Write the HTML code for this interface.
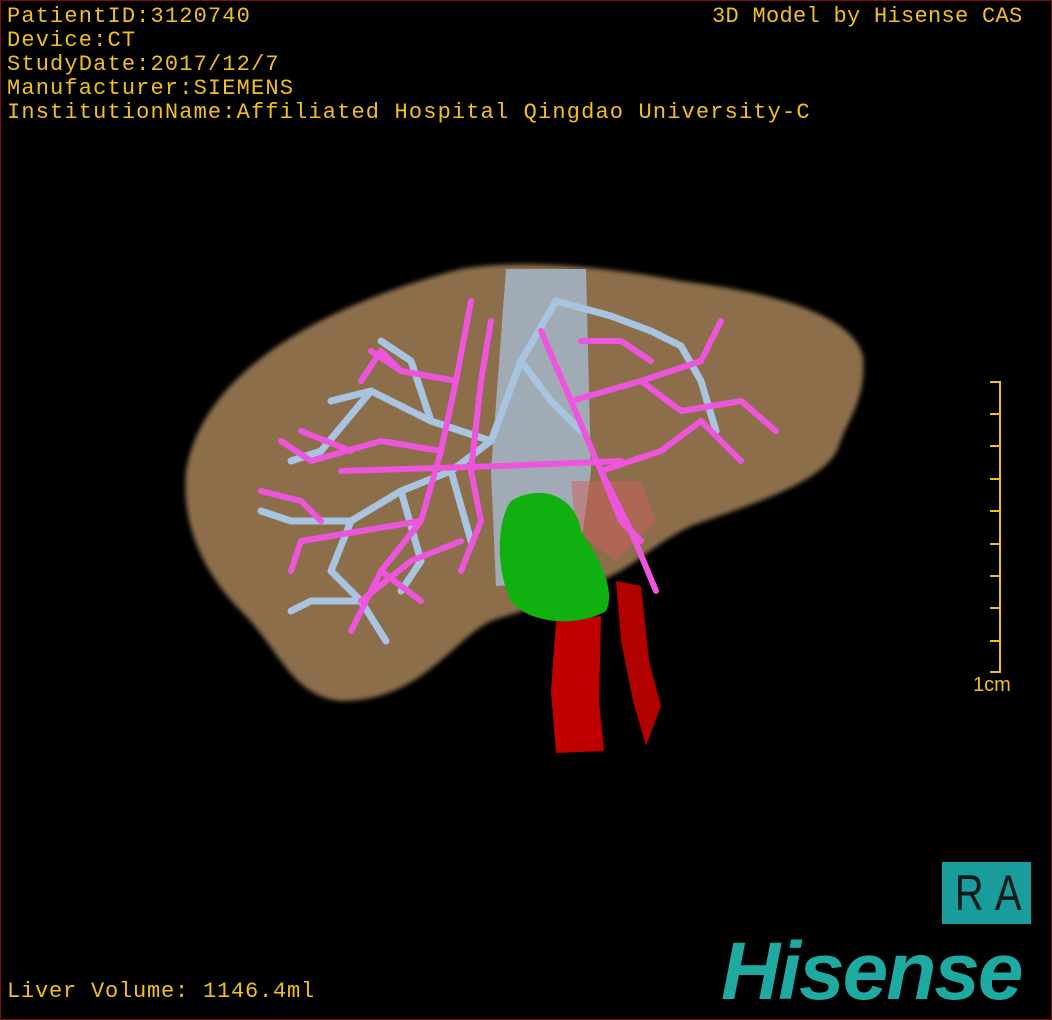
<!DOCTYPE html>
<html><head><meta charset="utf-8"><style>
html,body{margin:0;padding:0;background:#000}
#w{position:relative;width:1050px;height:1018px;border:1px solid #7a1010;overflow:hidden;background:#000}
.t{position:absolute;color:#f0c020;font-family:"Liberation Mono",monospace;font-size:22px;line-height:24px;white-space:pre;letter-spacing:1.15px}
</style></head><body><div id="w">
<svg width="1050" height="1018" style="position:absolute;left:0;top:0">
<defs><filter id="b"><feGaussianBlur stdDeviation="2.5"/></filter></defs>
<path d="M185,470 C200,380 300,310 460,268 C520,258 600,265 680,280 C760,290 850,310 862,355 C866,400 845,420 838,445 C825,480 760,500 690,525 C650,545 640,560 610,575 C560,600 520,610 490,620 C450,640 420,700 340,700 C290,695 280,650 240,610 C200,570 180,520 185,470 Z" fill="#8c6e4c" filter="url(#b)"/>
<path d="M505,268 L585,268 L590,470 L575,580 L495,585 L490,470 Z" fill="#a8c0d8" opacity="0.75"/>
<path d="M555,620 L600,615 L598,700 L603,750 L555,752 L550,690 Z" fill="#c00000"/>
<path d="M615,580 L640,585 L648,660 L660,705 L645,745 L632,700 L620,640 Z" fill="#b00000"/>
<path d="M570,480 L640,480 L655,520 L615,560 L575,530Z" fill="#d06060" opacity="0.5"/>
<path d="M510,500 C540,482 575,495 580,530 C600,560 615,590 605,610 C580,625 530,625 510,600 C495,570 495,520 510,500Z" fill="#10b010"/>
<g fill="none" stroke-linecap="round" stroke-linejoin="round">
<g stroke="#a8c4e0" stroke-width="7">
<path d="M555,300 L520,360 L490,440 L450,470 L400,490 L350,520 L330,570 L360,600 L385,640"/>
<path d="M490,440 L430,420 L370,390 L330,400"/>
<path d="M430,420 L410,360 L380,340"/>
<path d="M350,520 L290,520 L260,510"/>
<path d="M555,300 L610,315 L650,330 L680,345 L700,380 L715,430"/>
<path d="M520,360 L550,400 L580,430"/>
<path d="M400,490 L420,560 L400,590"/>
<path d="M450,470 L470,540"/>
<path d="M370,390 L320,450 L290,460"/>
<path d="M360,600 L310,600 L290,610"/>
</g>
<g stroke="#ee55dd" stroke-width="6">
<path d="M470,300 L455,380 L440,450 L420,520 L380,570 L350,630"/>
<path d="M440,450 L380,440 L310,460 L280,440"/>
<path d="M420,520 L360,530 L300,540 L290,570"/>
<path d="M380,570 L420,600"/>
<path d="M455,380 L400,370 L370,350"/>
<path d="M400,370 L380,350 L360,380"/>
<path d="M490,320 L480,380 L470,470"/>
<path d="M340,470 L500,465 L620,460"/>
<path d="M540,330 L570,400 L600,470 L620,520 L640,540"/>
<path d="M570,400 L640,380 L700,360 L720,320"/>
<path d="M640,380 L680,410 L740,400 L775,430"/>
<path d="M600,470 L660,450 L700,420 L740,460"/>
<path d="M580,340 L620,340 L650,360"/>
<path d="M360,600 L410,560 L460,540"/>
<path d="M470,470 L480,520 L460,570"/>
<path d="M300,430 L350,450"/>
<path d="M260,490 L300,500 L320,520"/>
<path d="M600,470 L630,530 L655,590"/>
</g>
</g>
<g stroke="#f0c020" stroke-width="2">
<line x1="999" y1="380" x2="999" y2="672"/>
<line x1="989" y1="381" x2="999" y2="381"/><line x1="989" y1="413" x2="999" y2="413"/><line x1="989" y1="445" x2="999" y2="445"/><line x1="989" y1="478" x2="999" y2="478"/><line x1="989" y1="510" x2="999" y2="510"/><line x1="989" y1="543" x2="999" y2="543"/><line x1="989" y1="575" x2="999" y2="575"/><line x1="989" y1="607" x2="999" y2="607"/><line x1="989" y1="640" x2="999" y2="640"/><line x1="989" y1="671" x2="999" y2="671"/>
</g>
</svg>
<div class="t" style="left:6px;top:4px">PatientID:3120740
Device:CT
StudyDate:2017/12/7
Manufacturer:SIEMENS
InstitutionName:Affiliated Hospital Qingdao University-C</div>
<div class="t" style="left:711px;top:4px;letter-spacing:0.3px">3D Model by Hisense CAS</div>
<div class="t" style="left:6px;top:979px;letter-spacing:0.8px">Liver Volume: 1146.4ml</div>
<div style="position:absolute;left:972px;top:673px;color:#f0c020;font-family:'Liberation Sans',sans-serif;font-size:20px">1cm</div>
<div style="position:absolute;left:941px;top:861px;width:89px;height:62px;background:#1a9c9c;color:#0a1a1a;font-family:'Liberation Sans',sans-serif;font-size:50px;line-height:62px;text-align:center"><span style="display:inline-block;transform:scaleX(0.8);letter-spacing:14px;margin-right:-14px">RA</span></div>
<div style="position:absolute;left:720px;top:930px;color:#1eaaa0;font-family:'Liberation Sans',sans-serif;font-weight:bold;font-style:italic;font-size:82px;line-height:82px;letter-spacing:-2px">Hisense</div>
</div></body></html>
